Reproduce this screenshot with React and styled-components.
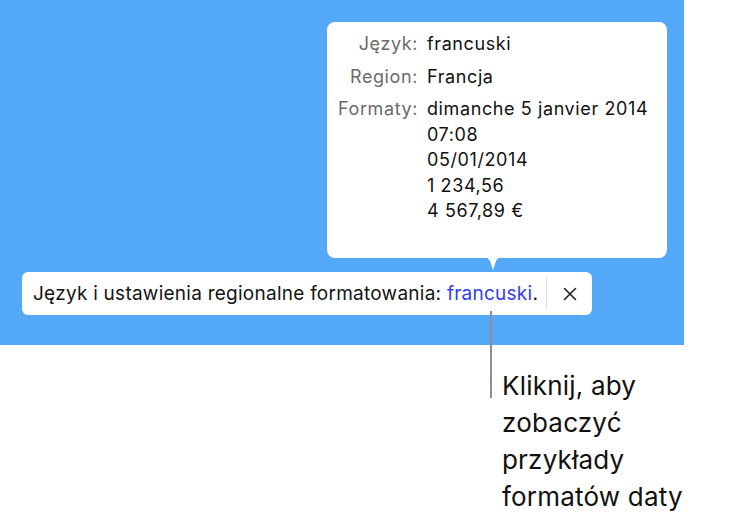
import React from "react";
import styled, { createGlobalStyle } from "styled-components";

const Global = createGlobalStyle`
  html, body { margin: 0; padding: 0; background: #ffffff; }
  body { font-family: Inter, "Liberation Sans", Arial, sans-serif; -webkit-font-smoothing: antialiased; }
`;

const Page = styled.div`
  width: 732px;
  height: 521px;
  display: flex;
  flex-direction: column;
  overflow: hidden;
`;

const Stage = styled.div`
  width: 684px;
  height: 345px;
  background: #53a8f8;
  display: flex;
  flex-direction: column;
  align-items: flex-start;
  padding: 22px 0 0 22px;
  box-sizing: border-box;
`;

const Popover = styled.div`
  position: relative;
  margin-left: 305px;
  width: 340px;
  height: 236px;
  box-sizing: border-box;
  background: #fff;
  border-radius: 8px;
  padding: 9px 0 0 0;
  display: grid;
  grid-template-columns: 91px 1fr;
  column-gap: 9px;
  align-content: start;
  font-size: 18px;
  letter-spacing: 0.6px;
`;

const Arrow = styled.svg`
  position: absolute;
  left: 153px;
  top: 234px;
`;

const Label = styled.div`
  text-align: right;
  color: #6b6b6b;
  line-height: 25.5px;
  margin-bottom: ${(p) => p.$gap || 0}px;
`;

const Value = styled.div`
  color: #111;
  line-height: 25.5px;
  margin-bottom: ${(p) => p.$gap || 0}px;
`;

const Bar = styled.div`
  margin-top: 14px;
  width: 570px;
  height: 43px;
  background: #fff;
  border-radius: 6px;
  display: flex;
  align-items: stretch;
  font-size: 19px;
  letter-spacing: 0.25px;
  color: #141414;
`;

const Message = styled.div`
  flex: 1;
  display: flex;
  align-items: center;
  padding-left: 11px;
  white-space: nowrap;
`;

const Link = styled.span`
  position: relative;
  color: #2e3cf2;
`;

const Leader = styled.span`
  position: absolute;
  left: 50%;
  top: 100%;
  margin-top: 6px;
  width: 2px;
  height: 87px;
  background: #8e8e8e;
`;

const Divider = styled.div`
  width: 1px;
  margin: 5px 0;
  background: #e2e2e2;
`;

const Close = styled.button`
  width: 45px;
  border: 0;
  background: transparent;
  padding: 0;
  display: flex;
  align-items: center;
  justify-content: center;
`;

const Caption = styled.div`
  margin: 22px 0 0 502px;
  font-size: 26px;
  line-height: 37px;
  color: #111;
  letter-spacing: 0.2px;
`;

const rows = [
  { label: "Język:", values: ["francuski"], gap: 7 },
  { label: "Region:", values: ["Francja"], gap: 7 },
  {
    label: "Formaty:",
    values: ["dimanche 5 janvier 2014", "07:08", "05/01/2014", "1 234,56", "4 567,89 €"],
    gap: 0,
  },
];

export default function App() {
  return (
    <Page>
      <Global />
      <Stage>
        <Popover>
          {rows.map((r) => (
            <React.Fragment key={r.label}>
              <Label $gap={r.gap}>{r.label}</Label>
              <Value $gap={r.gap}>
                {r.values.map((v) => (
                  <div key={v}>{v}</div>
                ))}
              </Value>
            </React.Fragment>
          ))}
          <Arrow width="26" height="16" viewBox="0 0 26 16">
            <path d="M0 0 C6 0 8 2 10 5 L13 14 L16 5 C18 2 20 0 26 0 Z" fill="#fff" />
          </Arrow>
        </Popover>
        <Bar>
          <Message>
            <span>
              Język i ustawienia regionalne formatowania:{" "}
              <Link>
                francuski
                <Leader />
              </Link>
              .
            </span>
          </Message>
          <Divider />
          <Close aria-label="Zamknij">
            <svg width="14" height="14" viewBox="0 0 14 14">
              <path d="M1.5 1.5 L12.5 12.5 M12.5 1.5 L1.5 12.5" stroke="#222" strokeWidth="1.6" strokeLinecap="round" />
            </svg>
          </Close>
        </Bar>
      </Stage>
      <Caption>
        Kliknij, aby
        <br />
        zobaczyć
        <br />
        przykłady
        <br />
        formatów daty
      </Caption>
    </Page>
  );
}
